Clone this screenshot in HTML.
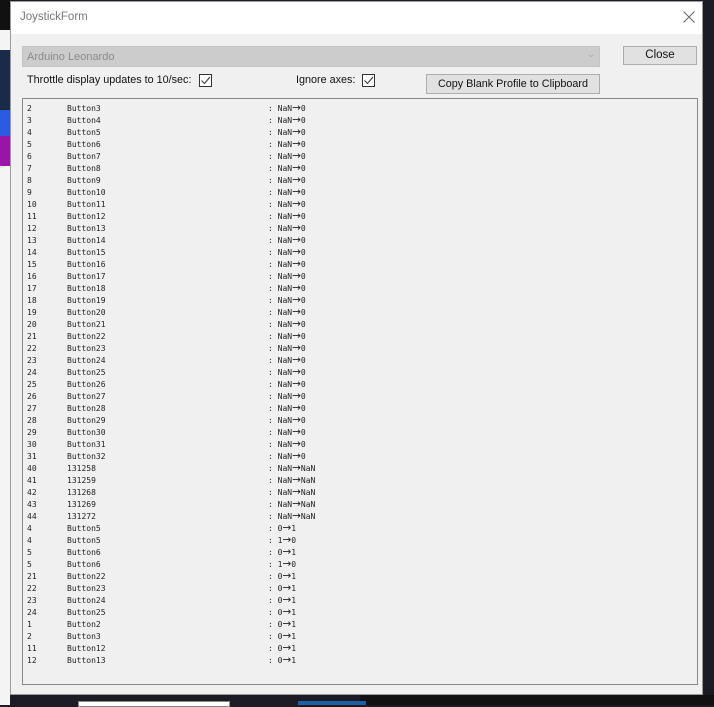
<!DOCTYPE html>
<html><head><style>
body{margin:0;width:714px;height:705px;position:relative;overflow:hidden;background:#1c1c24;font-family:"Liberation Sans",sans-serif}
.abs{position:absolute}
#win{left:10px;top:1px;width:693px;height:694px;background:#f0f0f0;border:1px solid #9a9a9a;box-sizing:border-box}
#title{left:0;top:0;width:691px;height:32px;background:#fff}
#list{position:absolute;left:4px;top:4px;font-family:"DejaVu Sans Mono","Liberation Mono",monospace;font-size:8px;color:#222;}
#list div{position:relative;height:12px;line-height:12px;white-space:pre;width:600px}
#list i,#list b,#list u{position:absolute;top:0;font-style:normal;font-weight:normal;text-decoration:none}
#list i{left:0}#list b{left:40px}#list u{left:241px}
#list s{text-decoration:none;font-family:"DejaVu Sans",sans-serif;font-size:10.5px;line-height:10px}
</style></head><body>
<div class="abs" style="left:0;top:0;width:10px;height:705px;background:#f4f4f4"></div>
<div class="abs" style="left:0;top:0;width:10px;height:30px;background:#111"></div>
<div class="abs" style="left:0;top:50px;width:10px;height:60px;background:#1a2b4a"></div>
<div class="abs" style="left:0;top:110px;width:10px;height:26px;background:#2a5be0"></div>
<div class="abs" style="left:0;top:136px;width:10px;height:30px;background:#9a14a8"></div>
<div class="abs" style="left:360px;top:695px;width:354px;height:10px;background:#111"></div>
<div class="abs" style="left:78px;top:701px;width:150px;height:4px;background:#fff;border:1px solid #888"></div>
<div class="abs" style="left:298px;top:701px;width:68px;height:4px;background:#1d5ea8"></div>
<div id="win" class="abs">
 <div id="title" class="abs"><span class="abs" style="left:9px;top:9px;font-size:11.5px;color:#777">JoystickForm</span>
  <svg class="abs" style="left:672px;top:9px" width="12" height="12"><path d="M0.5 0.5L11.5 11.5M11.5 0.5L0.5 11.5" stroke="#666" stroke-width="1"/></svg></div>
 <div class="abs" style="left:11px;top:44px;width:578px;height:21px;background:#ccc;border:1px solid #c4c4c4;box-sizing:border-box"><span class="abs" style="left:4px;top:4px;font-size:11px;color:#8a8a8a">Arduino Leonardo</span><span class="abs" style="left:564px;top:2px;font-size:10px;color:#aaa">⌄</span></div>
 <div class="abs" style="left:612px;top:44px;width:74px;height:19px;background:#e1e1e1;border:1px solid #adadad;box-sizing:border-box;font-size:11.5px;text-align:center;line-height:17px;color:#111">Close</div>
 <span class="abs" style="left:16px;top:72px;font-size:10.8px;color:#111">Throttle display updates to 10/sec:</span>
 <div class="abs" style="left:188px;top:72px;width:13px;height:13px;border:1px solid #333;background:#fff;box-sizing:border-box"><svg width="11" height="11" style="position:absolute;left:0;top:0"><path d="M1.5 5.5L4.5 8.5L10 2" stroke="#333" fill="none"/></svg></div>
 <span class="abs" style="left:285px;top:72px;font-size:10.8px;color:#111">Ignore axes:</span>
 <div class="abs" style="left:351px;top:72px;width:13px;height:13px;border:1px solid #333;background:#fff;box-sizing:border-box"><svg width="11" height="11" style="position:absolute;left:0;top:0"><path d="M1.5 5.5L4.5 8.5L10 2" stroke="#333" fill="none"/></svg></div>
 <div class="abs" style="left:415px;top:72px;width:174px;height:20px;background:#e1e1e1;border:1px solid #adadad;box-sizing:border-box;font-size:10.8px;text-align:center;line-height:18px;color:#111">Copy Blank Profile to Clipboard</div>
 <div class="abs" style="left:11px;top:96px;width:676px;height:587px;border:1px solid #888;box-sizing:border-box;background:#f0f0f0">
<div id="list">
<div><i>2</i><b>Button3</b><u>: NaN<s>→</s>0</u></div>
<div><i>3</i><b>Button4</b><u>: NaN<s>→</s>0</u></div>
<div><i>4</i><b>Button5</b><u>: NaN<s>→</s>0</u></div>
<div><i>5</i><b>Button6</b><u>: NaN<s>→</s>0</u></div>
<div><i>6</i><b>Button7</b><u>: NaN<s>→</s>0</u></div>
<div><i>7</i><b>Button8</b><u>: NaN<s>→</s>0</u></div>
<div><i>8</i><b>Button9</b><u>: NaN<s>→</s>0</u></div>
<div><i>9</i><b>Button10</b><u>: NaN<s>→</s>0</u></div>
<div><i>10</i><b>Button11</b><u>: NaN<s>→</s>0</u></div>
<div><i>11</i><b>Button12</b><u>: NaN<s>→</s>0</u></div>
<div><i>12</i><b>Button13</b><u>: NaN<s>→</s>0</u></div>
<div><i>13</i><b>Button14</b><u>: NaN<s>→</s>0</u></div>
<div><i>14</i><b>Button15</b><u>: NaN<s>→</s>0</u></div>
<div><i>15</i><b>Button16</b><u>: NaN<s>→</s>0</u></div>
<div><i>16</i><b>Button17</b><u>: NaN<s>→</s>0</u></div>
<div><i>17</i><b>Button18</b><u>: NaN<s>→</s>0</u></div>
<div><i>18</i><b>Button19</b><u>: NaN<s>→</s>0</u></div>
<div><i>19</i><b>Button20</b><u>: NaN<s>→</s>0</u></div>
<div><i>20</i><b>Button21</b><u>: NaN<s>→</s>0</u></div>
<div><i>21</i><b>Button22</b><u>: NaN<s>→</s>0</u></div>
<div><i>22</i><b>Button23</b><u>: NaN<s>→</s>0</u></div>
<div><i>23</i><b>Button24</b><u>: NaN<s>→</s>0</u></div>
<div><i>24</i><b>Button25</b><u>: NaN<s>→</s>0</u></div>
<div><i>25</i><b>Button26</b><u>: NaN<s>→</s>0</u></div>
<div><i>26</i><b>Button27</b><u>: NaN<s>→</s>0</u></div>
<div><i>27</i><b>Button28</b><u>: NaN<s>→</s>0</u></div>
<div><i>28</i><b>Button29</b><u>: NaN<s>→</s>0</u></div>
<div><i>29</i><b>Button30</b><u>: NaN<s>→</s>0</u></div>
<div><i>30</i><b>Button31</b><u>: NaN<s>→</s>0</u></div>
<div><i>31</i><b>Button32</b><u>: NaN<s>→</s>0</u></div>
<div><i>40</i><b>131258</b><u>: NaN<s>→</s>NaN</u></div>
<div><i>41</i><b>131259</b><u>: NaN<s>→</s>NaN</u></div>
<div><i>42</i><b>131268</b><u>: NaN<s>→</s>NaN</u></div>
<div><i>43</i><b>131269</b><u>: NaN<s>→</s>NaN</u></div>
<div><i>44</i><b>131272</b><u>: NaN<s>→</s>NaN</u></div>
<div><i>4</i><b>Button5</b><u>: 0<s>→</s>1</u></div>
<div><i>4</i><b>Button5</b><u>: 1<s>→</s>0</u></div>
<div><i>5</i><b>Button6</b><u>: 0<s>→</s>1</u></div>
<div><i>5</i><b>Button6</b><u>: 1<s>→</s>0</u></div>
<div><i>21</i><b>Button22</b><u>: 0<s>→</s>1</u></div>
<div><i>22</i><b>Button23</b><u>: 0<s>→</s>1</u></div>
<div><i>23</i><b>Button24</b><u>: 0<s>→</s>1</u></div>
<div><i>24</i><b>Button25</b><u>: 0<s>→</s>1</u></div>
<div><i>1</i><b>Button2</b><u>: 0<s>→</s>1</u></div>
<div><i>2</i><b>Button3</b><u>: 0<s>→</s>1</u></div>
<div><i>11</i><b>Button12</b><u>: 0<s>→</s>1</u></div>
<div><i>12</i><b>Button13</b><u>: 0<s>→</s>1</u></div>
</div>
 </div>
</div>
</body></html>
